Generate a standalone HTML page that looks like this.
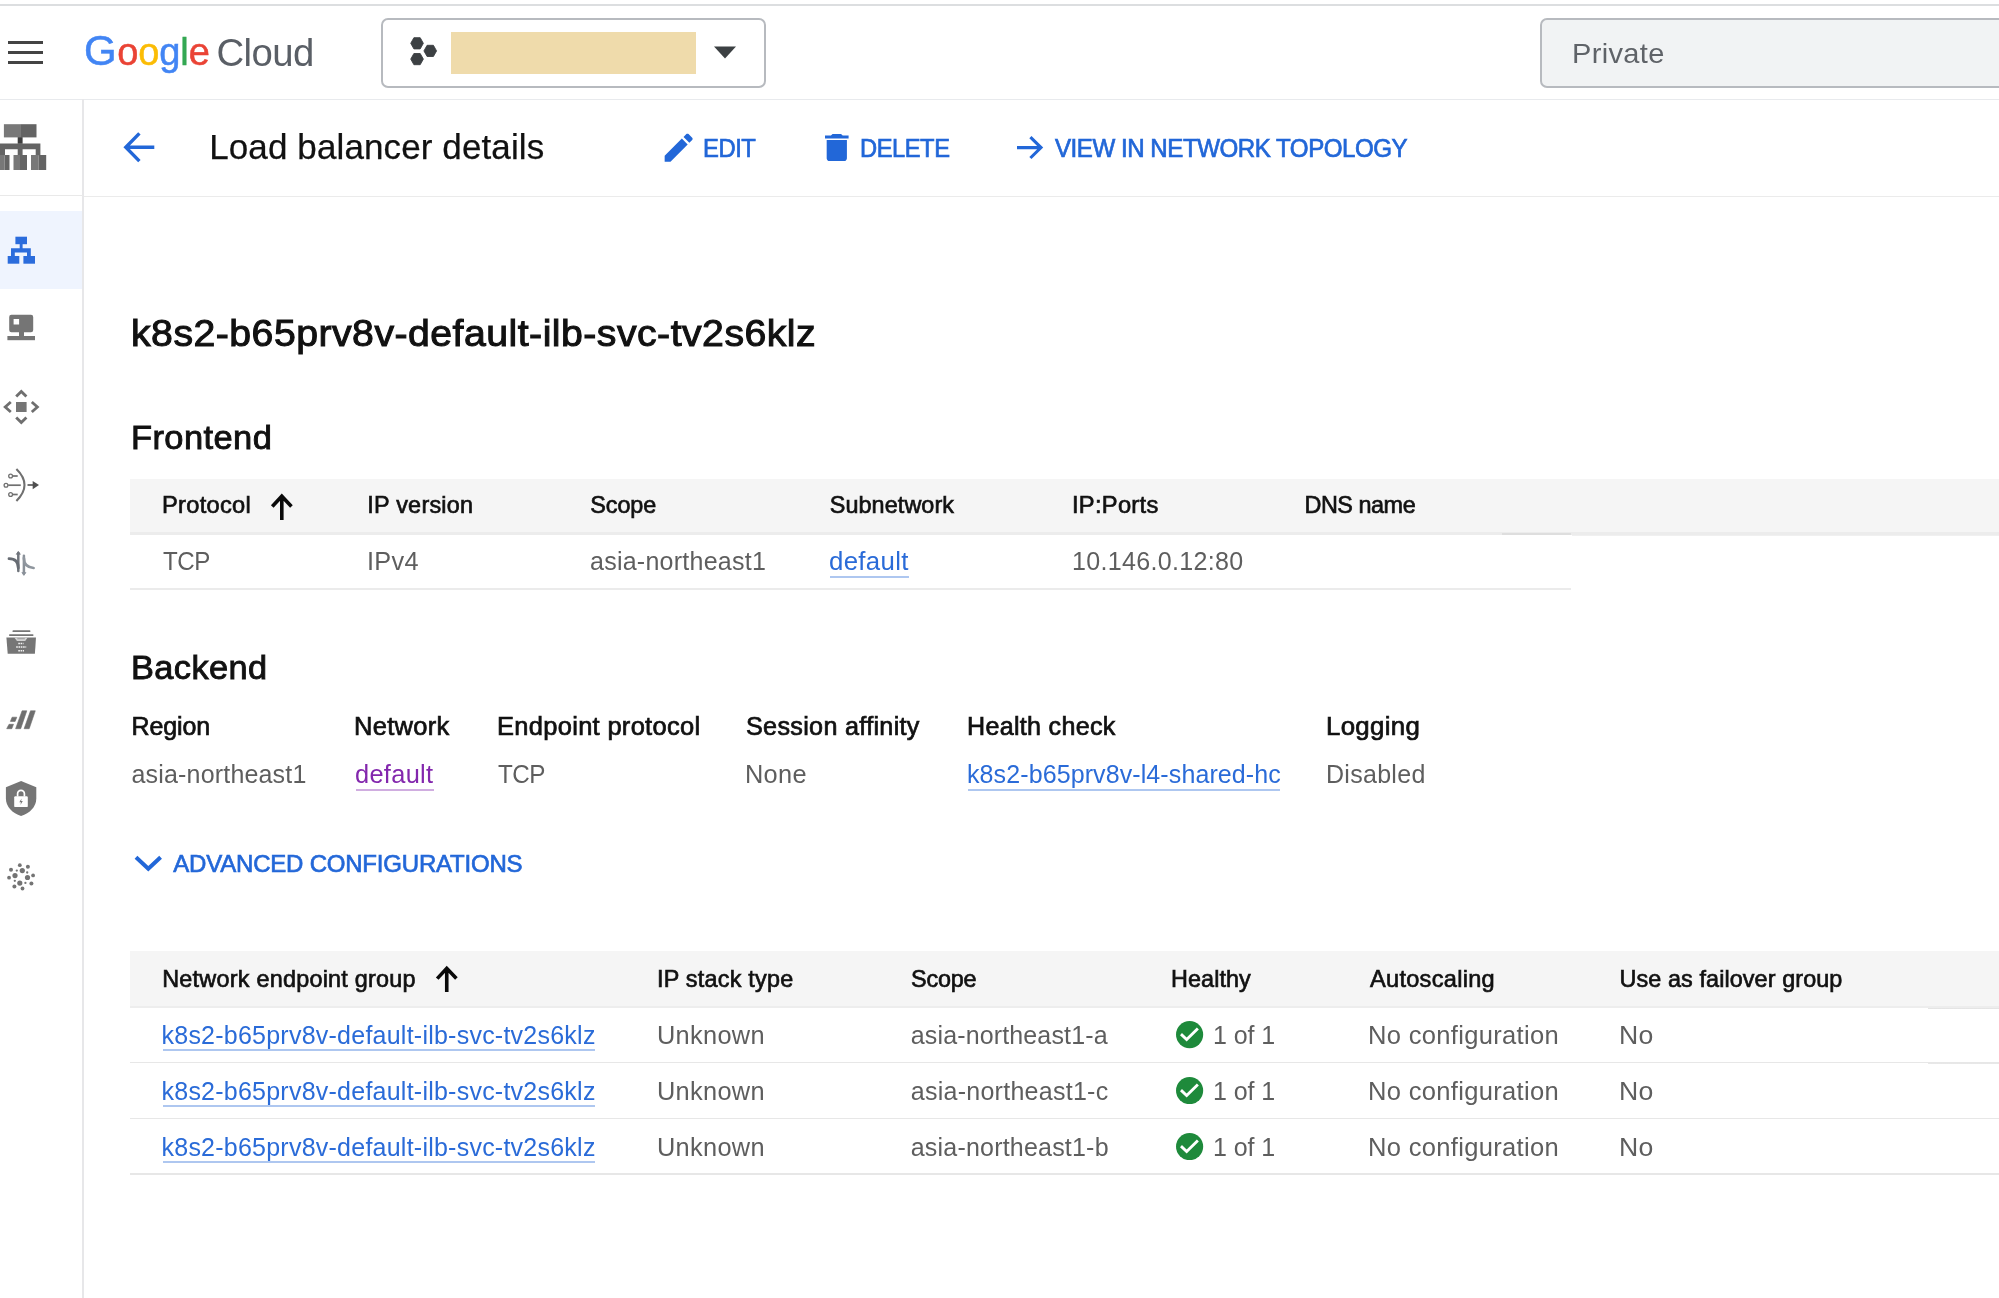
<!DOCTYPE html>
<html><head><meta charset="utf-8"><title>Load balancer details</title><style>
*{margin:0;padding:0;box-sizing:border-box}
html,body{width:1999px;height:1298px;overflow:hidden;background:#fff}
body{position:relative;font-family:"Liberation Sans", Arial, sans-serif;}
.t{position:absolute;white-space:pre;line-height:1.2;display:block}
.a{position:absolute}
#root{position:absolute;left:0;top:0;width:1999px;height:1298px;overflow:hidden;filter:blur(0.45px)}
</style></head><body>
<div id="root">
<!-- top chrome lines -->
<div class="a" style="left:0;top:4.4px;width:1999px;height:2px;background:#dcdee0"></div>
<div class="a" style="left:0;top:98.5px;width:1999px;height:1.9px;background:#e8eaed"></div>
<div class="a" style="left:82.2px;top:99px;width:1.9px;height:1199px;background:#e7e7e9"></div>
<div class="a" style="left:0;top:194.6px;width:83px;height:1.7px;background:#e9e9e9"></div>
<div class="a" style="left:84px;top:195.8px;width:1915px;height:1.6px;background:#ebebeb"></div>
<div class="a" style="left:0;top:211px;width:82.2px;height:78.400px;background:#eff4fe"></div>

<!-- hamburger -->
<div class="a" style="left:8px;top:40.7px;width:35.2px;height:3.6px;background:#444"></div>
<div class="a" style="left:8px;top:50.6px;width:35.2px;height:3.6px;background:#444"></div>
<div class="a" style="left:8px;top:60.5px;width:35.2px;height:3.6px;background:#444"></div>

<!-- project picker -->
<div class="a" style="left:381px;top:17.5px;width:385px;height:70.5px;border:2px solid #b7babf;border-radius:7px;background:#fff"></div>
<svg class="a" style="left:405px;top:32px" width="40" height="40" viewBox="405 32 40 40"><g fill="#3c4043" stroke="#3c4043" stroke-width="0.9" stroke-linejoin="round"><path d="M410.75 43.30 L413.90 37.70 L420.20 37.70 L423.35 43.30 L420.20 48.90 L413.90 48.90Z"/><path d="M423.95 50.90 L427.10 45.30 L433.40 45.30 L436.55 50.90 L433.40 56.50 L427.10 56.50Z"/><path d="M410.75 59.10 L413.90 53.50 L420.20 53.50 L423.35 59.10 L420.20 64.70 L413.90 64.70Z"/></g></svg>
<div class="a" style="left:451px;top:32px;width:245px;height:42px;background:#efdbab"></div>
<svg class="a" style="left:714px;top:46px" width="22" height="13" viewBox="0 0 22 13"><path d="M0 0.500H22L11 12.500z" fill="#3c4043"/></svg>

<!-- search box -->
<div class="a" style="left:1540px;top:17.5px;width:480px;height:70.5px;border:2px solid #b7babf;border-radius:7px;background:#f1f3f4"></div>

<!-- toolbar icons -->
<svg class="a" style="left:120px;top:128px" width="40" height="38" viewBox="120 128 40 38"><path d="M139.400 133.400L125.800 147.250l13.600 13.850M126.200 147.250H154.300" fill="none" stroke="#2267d8" stroke-width="3.400"/></svg>
<svg class="a" style="left:660.3px;top:128.9px" width="37.3" height="37.3" viewBox="0 0 24 24"><path fill="#2267d8" d="M3 17.250V21h3.750L17.810 9.940l-3.750-3.750L3 17.250zM20.710 7.040c.39-.39.39-1.020 0-1.410l-2.340-2.340c-.39-.39-1.020-.39-1.410 0l-1.830 1.830 3.750 3.750 1.830-1.830z"/></svg>
<svg class="a" style="left:825px;top:133.600px" width="23.600" height="27.400" viewBox="5 3 14 18" preserveAspectRatio="none"><path fill="#2267d8" d="M6 19c0 1.100.900 2 2 2h8c1.100 0 2-.900 2-2V7H6v12zM19 4h-3.500l-1-1h-5l-1 1H5v2h14V4z"/></svg>
<svg class="a" style="left:1012px;top:130px" width="36" height="36" viewBox="1012 130 36 36"><path d="M1030.400 137.200L1041 147.600l-10.600 10.400M1041 147.600H1017" fill="none" stroke="#2267d8" stroke-width="3.100"/></svg>

<!-- frontend table -->
<div class="a" style="left:130.100px;top:479px;width:1869px;height:54.500px;background:#f5f5f5"></div>
<div class="a" style="left:130.100px;top:532.3px;width:1869px;height:2.4px;background:#ececec"></div>
<div class="a" style="left:130.100px;top:588.2px;width:1441px;height:1.7px;background:#ebebeb"></div>
<svg class="a" style="left:266px;top:490px" width="32" height="34" viewBox="266 490 32 34"><path d="M272.250 506.500L281.800 496.200L291.450 506.500M281.800 496.600V519.900" fill="none" stroke="#0a0a0a" stroke-width="3.600"/></svg>


<div class="a" style="left:1501.800px;top:532.900px;width:69.700px;height:2.200px;background:#dedede"></div>
<div class="a" style="left:1571.500px;top:534.600px;width:428px;height:1.200px;background:#f0f0f0"></div>
<div class="a" style="left:1928.200px;top:1006px;width:71px;height:2.600px;background:linear-gradient(#dcdcdc,#e6e6e6)"></div>
<div class="a" style="left:1928.200px;top:1061.700px;width:71px;height:2.600px;background:linear-gradient(#dedede,#ebebeb)"></div>
<!-- chevron -->
<svg class="a" style="left:130px;top:850px" width="38" height="28" viewBox="130 850 38 28"><path d="M136 857.300l12.300 11.400 12.300-11.400" fill="none" stroke="#2267d8" stroke-width="4"/></svg>

<!-- NEG table -->
<div class="a" style="left:130.100px;top:951.100px;width:1869px;height:55px;background:#f5f5f5"></div>
<div class="a" style="left:130.100px;top:1005.6px;width:1869px;height:2.3px;background:#ededed"></div>
<div class="a" style="left:130.100px;top:1061.7px;width:1869px;height:1.5px;background:#e7e7e7"></div>
<div class="a" style="left:130.100px;top:1117.6px;width:1869px;height:1.5px;background:#e7e7e7"></div>
<div class="a" style="left:130.100px;top:1173.4px;width:1869px;height:1.5px;background:#e7e7e7"></div>
<svg class="a" style="left:430px;top:962px" width="32" height="34" viewBox="430 962 32 34"><path d="M437.200 978.600L446.750 968.300L456.400 978.600M446.750 968.700V992" fill="none" stroke="#0a0a0a" stroke-width="3.600"/></svg>

<!-- sidebar icons -->
<svg class="a" style="left:0;top:100px" width="82" height="820" viewBox="0 100 82 820">
<!-- product icon -->
<g>
<rect x="3.9" y="124.2" width="16.4" height="13.2" fill="#787878"/><rect x="20.2" y="124.2" width="16.3" height="13.2" fill="#646464"/>
<rect x="17.7" y="137.2" width="4.9" height="6.6" fill="#3d3d3d"/>
<path d="M-2 143.600H40.400V155.200H35.700V149.300H22.600V155.200H17.700V149.300H5V155.200H-2z" fill="#646464"/>
<rect x="-6" y="155" width="10.600" height="15" fill="#787878"/><rect x="4.600" y="155" width="4.900" height="15" fill="#646464"/>
<rect x="13.500" y="155" width="6.500" height="15" fill="#787878"/><rect x="20" y="155" width="7" height="15" fill="#646464"/>
<rect x="31" y="155" width="7.500" height="15" fill="#787878"/><rect x="38.500" y="155" width="7.700" height="15" fill="#646464"/>
</g>
<!-- load balancing (active) -->
<g fill="#2b6cdc">
<rect x="15.400" y="236.700" width="11.600" height="7.500"/>
<rect x="19.700" y="244" width="2.900" height="5"/>
<path d="M11 248.300H30.800V256.500H27V252.600H14.800V256.500H11z"/>
<rect x="7.700" y="256" width="11.600" height="7.700"/>
<rect x="23.400" y="256" width="11.600" height="7.700"/>
</g>
<!-- monitor -->
<g fill="#757575">
<path d="M11.400 314.800H31a2.200 2.200 0 0 1 2.200 2.200V330a2.200 2.200 0 0 1-2.200 2.200H11.400A2.200 2.200 0 0 1 9.200 330V317a2.200 2.200 0 0 1 2.200-2.200zM13.600 319V324.600H19.100V319z" fill-rule="evenodd"/>
<rect x="19" y="332" width="5" height="4.500"/>
<rect x="7.400" y="336" width="27.600" height="4.200"/>
</g>
<!-- cross arrows -->
<g fill="none" stroke="#6f6f6f" stroke-width="2.800">
<rect x="16" y="402" width="10.600" height="10" fill="#757575" stroke="none"/>
<path d="M16.200 396.600L21.300 391.400L26.400 396.600"/>
<path d="M16.200 417.400L21.300 422.600L26.400 417.400"/>
<path d="M10.800 402L5.200 407L10.800 412"/>
<path d="M31.800 402L37.400 407L31.800 412"/>
</g>
<!-- nat -->
<g fill="none" stroke="#707070" stroke-width="1.700">
<path d="M16.400 469.100Q32.600 485 16.400 500.900" stroke-width="2.100"/>
<path d="M27.500 485H33.500" stroke="#5a5a5a"/><path d="M32.700 480.900L39 485L32.700 489.300z" fill="#4f4f4f" stroke="none"/>
<path d="M12.800 476H17.700"/><circle cx="10.600" cy="476" r="1.900" stroke-width="1.300"/>
<path d="M8.200 485.200H20.800"/><circle cx="6" cy="485.200" r="1.900" stroke-width="1.300"/>
<path d="M12.800 494.500H17.700"/><circle cx="10.600" cy="494.500" r="1.900" stroke-width="1.300"/>
</g>
<!-- traffic director -->
<g fill="none" stroke-width="2.500" stroke-linecap="round">
<path d="M18.300 553V571" stroke="#70757c"/>
<path d="M16.500 554L18.300 551.400L20.100 554z" fill="#70757c" stroke="#70757c" stroke-width=".8" stroke-linejoin="round"/>
<path d="M18.300 568C18.300 561.500 14.500 558.800 9 558.700" stroke="#676c73" stroke-width="2.800"/>
<path d="M23.900 555.800V573.500" stroke="#8a9199"/>
<path d="M22.100 572.800L23.900 575.400L25.700 572.800z" fill="#8a9199" stroke="#8a9199" stroke-width=".8" stroke-linejoin="round"/>
<path d="M23.900 558C23.900 564 27.500 567.500 33.600 568" stroke="#8f969e" stroke-width="2.700"/>
</g>
<!-- drawer -->
<g fill="#767676">
<rect x="12.500" y="630.200" width="17.900" height="1.900" rx=".7"/>
<rect x="9" y="634.200" width="24.500" height="1.800" rx=".7"/>
<path d="M6.400 637.500H36L34.900 653.700H7.700z"/>
<path d="M14.250 637.500H27.700L25.200 641H17z" fill="#d2d2d2"/>
<path d="M17.300 638.700H24.800" stroke="#8c8c8c" stroke-width=".8"/>
<path d="M18.300 643.500H23.500M16.200 647H26.200M18.300 650.800H24" stroke="#f4f4f4" stroke-width="1.500" stroke-dasharray="1.600 .7"/>
</g>
<!-- slashes -->
<g fill="#6f6f6f" stroke="#6f6f6f" stroke-width=".6" stroke-linejoin="round">
<path d="M22.100 710.800H26.800L20.700 728.700H15.600z"/>
<path d="M30.500 710.800H35.300L29.200 728.700H24.100z"/>
<path d="M12.100 717.200H16.800L15.100 721.400H10.400z"/>
<path d="M9 724.300H13.500L11.800 728.700H6.700z"/>
</g>
<!-- shield -->
<g>
<path d="M21.100 781L36.300 787.300V798.500C36.300 806.500 29.800 813.500 21.100 816C12.400 813.500 5.900 806.500 5.900 798.500V787.300z" fill="#757575"/>
<rect x="14.200" y="796.300" width="13.600" height="10.800" rx="1.200" fill="#fff"/>
<path d="M17.600 796.500V793.800a3.400 3.400 0 0 1 6.800 0V796.500" fill="none" stroke="#fff" stroke-width="1.700"/>
<path d="M21.600 798.500L19.300 802.300H21L20.400 805L22.800 801H21.100z" fill="#757575"/>
</g>
<!-- network dots -->
<g fill="#747474">
<circle cx="22.300" cy="870.600" r="2.600"/><circle cx="15" cy="875.600" r="2.600"/><circle cx="27.500" cy="877.500" r="2.600"/><circle cx="19.800" cy="883.100" r="2.600"/>
<circle cx="19.800" cy="865.200" r="1.900"/><circle cx="27.900" cy="866.800" r="2"/><circle cx="11" cy="869.800" r="2"/><circle cx="33.100" cy="875.400" r="1.900"/>
<circle cx="9.050" cy="877.700" r="1.900"/><circle cx="31.400" cy="883.500" r="2"/><circle cx="14.400" cy="886.600" r="2"/><circle cx="22.500" cy="888.500" r="1.900"/>
<circle cx="16.800" cy="870.600" r="1.150"/><circle cx="27.200" cy="872.500" r="1.150"/><circle cx="14.800" cy="880.800" r="1.150"/><circle cx="25.400" cy="882.900" r="1.150"/>
</g>
</svg>
<!-- health checks -->
<svg class="a" style="left:1176.450px;top:1021.40px" width="27.200" height="27.200" viewBox="0 0 24 24"><circle cx="12" cy="12" r="12" fill="#1e8a3b"/><path d="M4.400 11.600L9.400 16.400L19.300 6.600" fill="none" stroke="#fff" stroke-width="2.500"/></svg>
<svg class="a" style="left:1176.450px;top:1077.20px" width="27.200" height="27.200" viewBox="0 0 24 24"><circle cx="12" cy="12" r="12" fill="#1e8a3b"/><path d="M4.400 11.600L9.400 16.400L19.300 6.600" fill="none" stroke="#fff" stroke-width="2.500"/></svg>
<svg class="a" style="left:1176.450px;top:1133.00px" width="27.200" height="27.200" viewBox="0 0 24 24"><circle cx="12" cy="12" r="12" fill="#1e8a3b"/><path d="M4.400 11.600L9.400 16.400L19.300 6.600" fill="none" stroke="#fff" stroke-width="2.500"/></svg>
<div class="t" style="left:84.05px;top:25.70px;font-size:38px;font-weight:400;color:#4285f4;letter-spacing:-0.100px;-webkit-text-stroke:0.5px #4285f4;-webkit-text-stroke-color:currentColor;"><span style="color:#4285f4;font-size:42px;letter-spacing:.5px">G</span><span style="color:#ea4335">o</span><span style="color:#fbbc05">o</span><span style="color:#4285f4">g</span><span style="color:#34a853">l</span><span style="color:#ea4335">e</span></div>
<div class="t" style="left:216.50px;top:29.50px;font-size:38.3px;font-weight:400;color:#5a5f66;letter-spacing:-0.550px;">Cloud</div>
<div class="t" style="left:1572.31px;top:35.50px;font-size:28.5px;font-weight:400;color:#5f6368;letter-spacing:0.342px;transform:scaleX(1.0172);transform-origin:0 0;">Private</div>
<div class="t" style="left:209.15px;top:126.00px;font-size:35px;font-weight:400;color:#111111;letter-spacing:0.118px;-webkit-text-stroke:0.25px #111111;">Load balancer details</div>
<div class="t" style="left:703.33px;top:132.80px;font-size:25px;font-weight:400;color:#2267d8;letter-spacing:-0.500px;-webkit-text-stroke:0.7px #2267d8;transform:scaleX(0.9533);transform-origin:0 0;">EDIT</div>
<div class="t" style="left:860.34px;top:132.80px;font-size:25px;font-weight:400;color:#2267d8;letter-spacing:-0.500px;-webkit-text-stroke:0.7px #2267d8;transform:scaleX(0.9496);transform-origin:0 0;">DELETE</div>
<div class="t" style="left:1055.24px;top:132.90px;font-size:25px;font-weight:400;color:#2267d8;letter-spacing:-0.500px;-webkit-text-stroke:0.7px #2267d8;transform:scaleX(0.9651);transform-origin:0 0;">VIEW IN NETWORK TOPOLOGY</div>
<div class="t" style="left:131.31px;top:310.50px;font-size:37.6px;font-weight:400;color:#111111;letter-spacing:0.451px;-webkit-text-stroke:1.02px #111111;transform:scaleX(1.0441);transform-origin:0 0;">k8s2-b65prv8v-default-ilb-svc-tv2s6klz</div>
<div class="t" style="left:130.73px;top:418.40px;font-size:32.8px;font-weight:400;color:#111111;letter-spacing:0.394px;-webkit-text-stroke:0.89px #111111;transform:scaleX(1.0511);transform-origin:0 0;">Frontend</div>
<div class="t" style="left:162.08px;top:490.50px;font-size:23.4px;font-weight:400;color:#111111;letter-spacing:0.281px;-webkit-text-stroke:0.66px #111111;transform:scaleX(1.0110);transform-origin:0 0;">Protocol</div>
<div class="t" style="left:367.25px;top:490.50px;font-size:23.4px;font-weight:400;color:#111111;letter-spacing:0.250px;-webkit-text-stroke:0.66px #111111;">IP version</div>
<div class="t" style="left:590.25px;top:490.50px;font-size:23.4px;font-weight:400;color:#111111;letter-spacing:-0.062px;-webkit-text-stroke:0.66px #111111;">Scope</div>
<div class="t" style="left:829.75px;top:490.50px;font-size:23.4px;font-weight:400;color:#111111;letter-spacing:0.083px;-webkit-text-stroke:0.66px #111111;">Subnetwork</div>
<div class="t" style="left:1071.73px;top:490.50px;font-size:23.4px;font-weight:400;color:#111111;letter-spacing:0.281px;-webkit-text-stroke:0.66px #111111;transform:scaleX(1.0125);transform-origin:0 0;">IP:Ports</div>
<div class="t" style="left:1304.50px;top:490.50px;font-size:23.4px;font-weight:400;color:#111111;letter-spacing:-0.464px;-webkit-text-stroke:0.66px #111111;">DNS name</div>
<div class="t" style="left:162.92px;top:546.00px;font-size:25px;font-weight:400;color:#5e5e5e;letter-spacing:-0.500px;transform:scaleX(0.9651);transform-origin:0 0;">TCP</div>
<div class="t" style="left:366.73px;top:546.00px;font-size:25px;font-weight:400;color:#5e5e5e;letter-spacing:0.300px;transform:scaleX(1.0104);transform-origin:0 0;">IPv4</div>
<div class="t" style="left:590.00px;top:546.00px;font-size:25px;font-weight:400;color:#5e5e5e;letter-spacing:0.250px;">asia-northeast1</div>
<a class="t" style="left:829.47px;top:546.00px;font-size:25px;font-weight:400;color:#2a6bd8;letter-spacing:0.300px;transform:scaleX(1.0323);transform-origin:0 0;">default</a>
<div class="a" style="left:830.0px;top:576.10px;width:79.2px;height:2px;background:#2a6bd8;opacity:.38"></div>
<div class="t" style="left:1071.50px;top:546.00px;font-size:25px;font-weight:400;color:#5e5e5e;letter-spacing:0.300px;transform:scaleX(1.0021);transform-origin:0 0;">10.146.0.12:80</div>
<div class="t" style="left:131.14px;top:647.90px;font-size:32.8px;font-weight:400;color:#111111;letter-spacing:0.394px;-webkit-text-stroke:0.89px #111111;transform:scaleX(1.0475);transform-origin:0 0;">Backend</div>
<div class="t" style="left:131.55px;top:711.00px;font-size:25px;font-weight:400;color:#111111;letter-spacing:-0.130px;-webkit-text-stroke:0.7px #111111;">Region</div>
<div class="t" style="left:354.22px;top:711.00px;font-size:25px;font-weight:400;color:#111111;letter-spacing:0.300px;-webkit-text-stroke:0.7px #111111;transform:scaleX(1.0184);transform-origin:0 0;">Network</div>
<div class="t" style="left:496.97px;top:711.00px;font-size:25px;font-weight:400;color:#111111;letter-spacing:0.300px;-webkit-text-stroke:0.7px #111111;transform:scaleX(1.0188);transform-origin:0 0;">Endpoint protocol</div>
<div class="t" style="left:746.24px;top:711.00px;font-size:25px;font-weight:400;color:#111111;letter-spacing:0.300px;-webkit-text-stroke:0.7px #111111;transform:scaleX(1.0073);transform-origin:0 0;">Session affinity</div>
<div class="t" style="left:966.99px;top:711.00px;font-size:25px;font-weight:400;color:#111111;letter-spacing:0.300px;-webkit-text-stroke:0.7px #111111;transform:scaleX(1.0031);transform-origin:0 0;">Health check</div>
<div class="t" style="left:1326.19px;top:711.00px;font-size:25px;font-weight:400;color:#111111;letter-spacing:0.300px;-webkit-text-stroke:0.7px #111111;transform:scaleX(1.0336);transform-origin:0 0;">Logging</div>
<div class="t" style="left:131.50px;top:759.00px;font-size:25px;font-weight:400;color:#5e5e5e;letter-spacing:0.179px;">asia-northeast1</div>
<a class="t" style="left:354.98px;top:759.00px;font-size:25px;font-weight:400;color:#8327ad;letter-spacing:0.300px;transform:scaleX(1.0158);transform-origin:0 0;">default</a>
<div class="a" style="left:355.5px;top:789.00px;width:78.0px;height:2px;background:#8327ad;opacity:.38"></div>
<div class="t" style="left:498.27px;top:759.00px;font-size:25px;font-weight:400;color:#5e5e5e;letter-spacing:-0.500px;transform:scaleX(0.9683);transform-origin:0 0;">TCP</div>
<div class="t" style="left:744.97px;top:759.00px;font-size:25px;font-weight:400;color:#5e5e5e;letter-spacing:0.300px;transform:scaleX(1.0147);transform-origin:0 0;">None</div>
<a class="t" style="left:967.00px;top:759.00px;font-size:25px;font-weight:400;color:#2a6bd8;letter-spacing:0.100px;">k8s2-b65prv8v-l4-shared-hc</a>
<div class="a" style="left:968.2px;top:789.00px;width:312.2px;height:2px;background:#2a6bd8;opacity:.38"></div>
<div class="t" style="left:1326.00px;top:759.00px;font-size:25px;font-weight:400;color:#5e5e5e;letter-spacing:0.286px;">Disabled</div>
<div class="t" style="left:173.25px;top:850.00px;font-size:24px;font-weight:400;color:#2267d8;letter-spacing:-0.205px;-webkit-text-stroke:0.67px #2267d8;">ADVANCED CONFIGURATIONS</div>
<div class="t" style="left:162.20px;top:964.60px;font-size:23.4px;font-weight:400;color:#111111;letter-spacing:0.240px;-webkit-text-stroke:0.66px #111111;">Network endpoint group</div>
<div class="t" style="left:657.00px;top:964.60px;font-size:23.4px;font-weight:400;color:#111111;letter-spacing:0.229px;-webkit-text-stroke:0.66px #111111;">IP stack type</div>
<div class="t" style="left:911.00px;top:964.60px;font-size:23.4px;font-weight:400;color:#111111;letter-spacing:-0.188px;-webkit-text-stroke:0.66px #111111;">Scope</div>
<div class="t" style="left:1171.00px;top:964.60px;font-size:23.4px;font-weight:400;color:#111111;letter-spacing:0.083px;-webkit-text-stroke:0.66px #111111;">Healthy</div>
<div class="t" style="left:1370.25px;top:964.60px;font-size:23.4px;font-weight:400;color:#111111;letter-spacing:0.281px;-webkit-text-stroke:0.66px #111111;transform:scaleX(1.0077);transform-origin:0 0;">Autoscaling</div>
<div class="t" style="left:1619.50px;top:964.60px;font-size:23.4px;font-weight:400;color:#111111;letter-spacing:0.092px;-webkit-text-stroke:0.66px #111111;">Use as failover group</div>
<a class="t" style="left:161.50px;top:1019.80px;font-size:25px;font-weight:400;color:#2a6bd8;letter-spacing:0.236px;">k8s2-b65prv8v-default-ilb-svc-tv2s6klz</a>
<div class="a" style="left:162.8px;top:1049.40px;width:432.0px;height:2px;background:#2a6bd8;opacity:.38"></div>
<div class="t" style="left:656.72px;top:1019.80px;font-size:25px;font-weight:400;color:#5e5e5e;letter-spacing:0.300px;transform:scaleX(1.0142);transform-origin:0 0;">Unknown</div>
<div class="t" style="left:910.75px;top:1019.80px;font-size:25px;font-weight:400;color:#5e5e5e;letter-spacing:0.141px;">asia-northeast1-a</div>
<div class="t" style="left:1213.10px;top:1019.80px;font-size:25px;font-weight:400;color:#5e5e5e;letter-spacing:-0.110px;">1 of 1</div>
<div class="t" style="left:1367.96px;top:1019.80px;font-size:25px;font-weight:400;color:#5e5e5e;letter-spacing:0.300px;transform:scaleX(1.0219);transform-origin:0 0;">No configuration</div>
<div class="t" style="left:1618.87px;top:1019.80px;font-size:25px;font-weight:400;color:#5e5e5e;letter-spacing:0.300px;transform:scaleX(1.0648);transform-origin:0 0;">No</div>
<a class="t" style="left:161.50px;top:1075.65px;font-size:25px;font-weight:400;color:#2a6bd8;letter-spacing:0.236px;">k8s2-b65prv8v-default-ilb-svc-tv2s6klz</a>
<div class="a" style="left:162.8px;top:1105.25px;width:432.0px;height:2px;background:#2a6bd8;opacity:.38"></div>
<div class="t" style="left:656.72px;top:1075.65px;font-size:25px;font-weight:400;color:#5e5e5e;letter-spacing:0.300px;transform:scaleX(1.0142);transform-origin:0 0;">Unknown</div>
<div class="t" style="left:910.75px;top:1075.65px;font-size:25px;font-weight:400;color:#5e5e5e;letter-spacing:0.266px;">asia-northeast1-c</div>
<div class="t" style="left:1213.10px;top:1075.65px;font-size:25px;font-weight:400;color:#5e5e5e;letter-spacing:-0.110px;">1 of 1</div>
<div class="t" style="left:1367.96px;top:1075.65px;font-size:25px;font-weight:400;color:#5e5e5e;letter-spacing:0.300px;transform:scaleX(1.0219);transform-origin:0 0;">No configuration</div>
<div class="t" style="left:1618.87px;top:1075.65px;font-size:25px;font-weight:400;color:#5e5e5e;letter-spacing:0.300px;transform:scaleX(1.0648);transform-origin:0 0;">No</div>
<a class="t" style="left:161.50px;top:1131.50px;font-size:25px;font-weight:400;color:#2a6bd8;letter-spacing:0.236px;">k8s2-b65prv8v-default-ilb-svc-tv2s6klz</a>
<div class="a" style="left:162.8px;top:1161.10px;width:432.0px;height:2px;background:#2a6bd8;opacity:.38"></div>
<div class="t" style="left:656.72px;top:1131.50px;font-size:25px;font-weight:400;color:#5e5e5e;letter-spacing:0.300px;transform:scaleX(1.0142);transform-origin:0 0;">Unknown</div>
<div class="t" style="left:910.75px;top:1131.50px;font-size:25px;font-weight:400;color:#5e5e5e;letter-spacing:0.203px;">asia-northeast1-b</div>
<div class="t" style="left:1213.10px;top:1131.50px;font-size:25px;font-weight:400;color:#5e5e5e;letter-spacing:-0.110px;">1 of 1</div>
<div class="t" style="left:1367.96px;top:1131.50px;font-size:25px;font-weight:400;color:#5e5e5e;letter-spacing:0.300px;transform:scaleX(1.0219);transform-origin:0 0;">No configuration</div>
<div class="t" style="left:1618.87px;top:1131.50px;font-size:25px;font-weight:400;color:#5e5e5e;letter-spacing:0.300px;transform:scaleX(1.0648);transform-origin:0 0;">No</div>
</div>
</body></html>
